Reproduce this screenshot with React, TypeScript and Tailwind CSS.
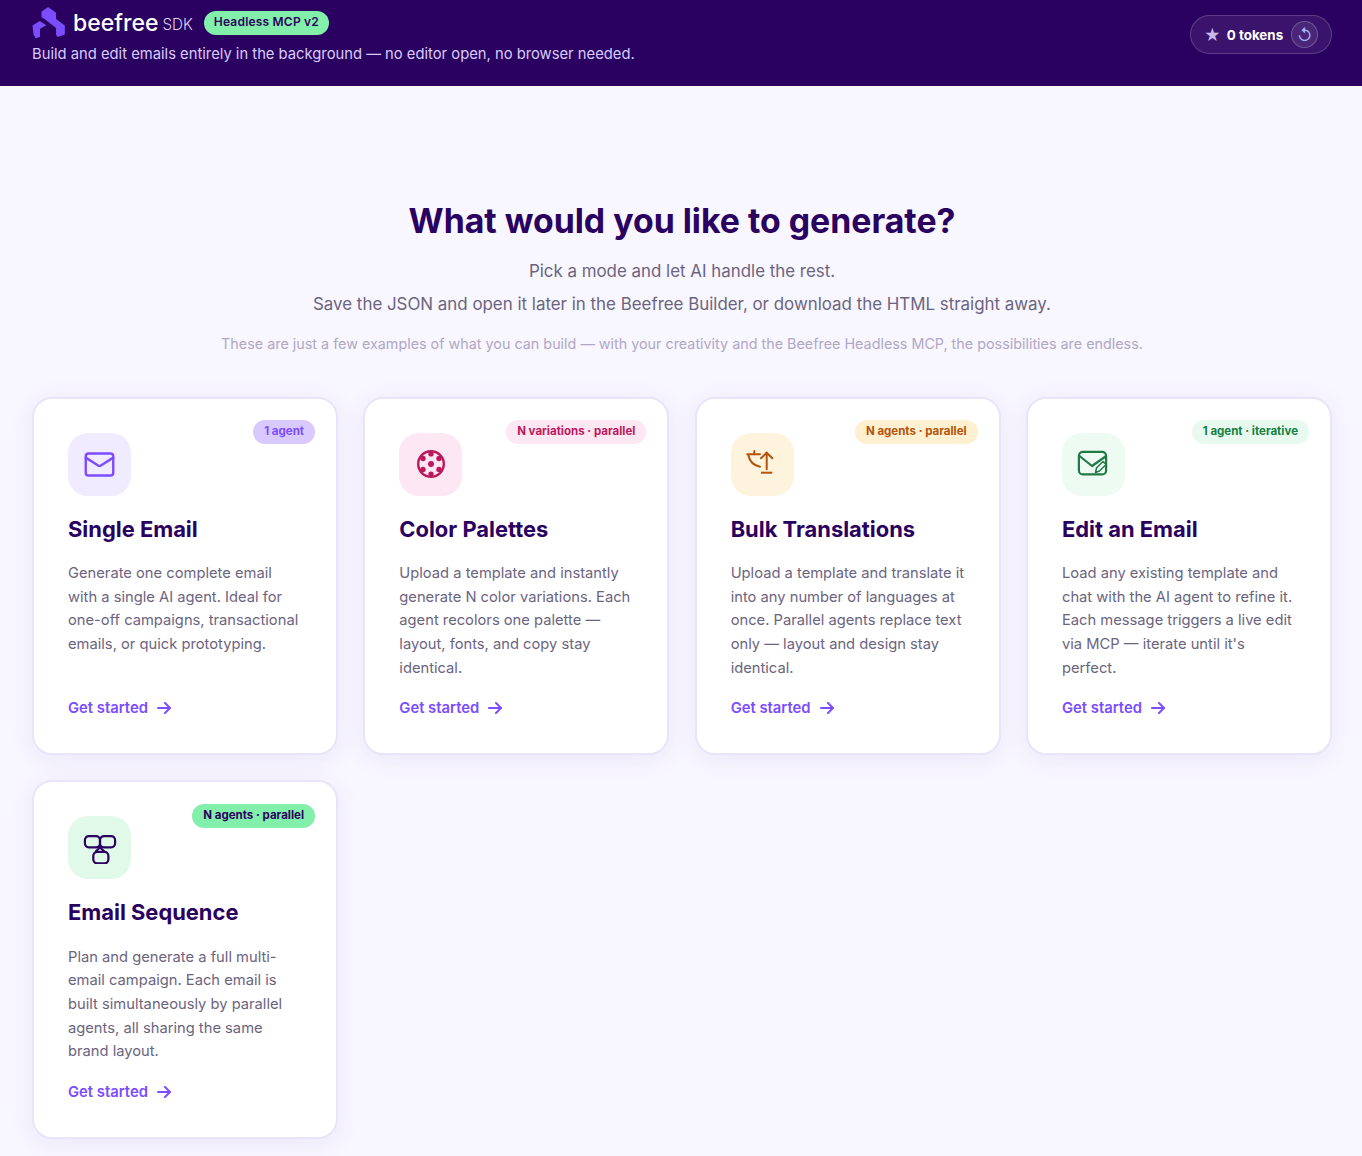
import { Mail } from "lucide-react";
import type { ReactNode } from "react";

// Small hand drawn icons for the cards lucide has no match for
const PaletteIcon = () => (
  <svg width="28" height="28" viewBox="0 0 28 28" fill="currentColor">
    <circle cx="14" cy="14" r="12.8" fill="none" stroke="currentColor" strokeWidth="2.4" />
    <circle cx="14" cy="14" r="3" />
    <circle cx="14" cy="3.900" r="2.700" />
    <circle cx="14" cy="24.100" r="2.700" />
    <circle cx="6" cy="8.500" r="2.700" />
    <circle cx="22" cy="8.500" r="2.700" />
    <circle cx="6" cy="19.500" r="2.700" />
    <circle cx="22" cy="19.500" r="2.700" />
  </svg>
);

const TranslateIcon = () => (
  <svg width="32" height="28" viewBox="0 0 32 28" fill="none" stroke="currentColor" strokeWidth="2" strokeLinecap="round">
    <path d="M1.300 4.300H14" />
    <path d="M8.300 1V4.300" />
    <path d="M2.300 5C3.500 11 8 15.500 14 16.700" />
    <path d="M20.700 3V19.300" />
    <path d="M15 8.300L20.700 2.700L26.300 8.300" />
    <path d="M15 22.700H26.300" strokeLinecap="butt" />
  </svg>
);

const EditMailIcon = () => (
  <svg width="32" height="28" viewBox="0 0 32 28" fill="none" stroke="currentColor" strokeWidth="2.200" strokeLinecap="round" strokeLinejoin="round">
    <rect x="1.900" y="1.900" width="27.200" height="22.500" rx="4" />
    <path d="M2.500 6L15 16L28.500 6.500" />
    <path d="M18.500 22.500L19.500 18L26 11.500L29 14.500L22.500 21z" fill="#edfbf3" strokeWidth="1.500" />
  </svg>
);

const SequenceIcon = () => (
  <svg width="36" height="32" viewBox="0 0 36 32" fill="none" stroke="currentColor" strokeWidth="2.200" strokeLinejoin="round">
    <rect x="2.900" y="4.100" width="15.100" height="11.200" rx="4" />
    <rect x="18" y="4.100" width="15.100" height="11.200" rx="4" />
    <rect x="11.300" y="19.800" width="15.100" height="11.500" rx="4" />
    <path d="M13.500 19.700L18 15.200L22.500 19.700" />
  </svg>
);

const ArrowIcon = () => (
  <svg width="14" height="12" viewBox="0 0 14 12" fill="none" stroke="currentColor" strokeWidth="2" strokeLinecap="round" strokeLinejoin="round">
    <path d="M1 6H13" />
    <path d="M8 1L13 6L8 11" />
  </svg>
);

const Logo = () => (
  <svg width="34" height="32" viewBox="0 0 34 33" fill="#7c4dff">
    <path d="M9.300 5L16 0L24.300 6V12.300L33.300 19V28.300L26 31L24.300 29V21.700L16.700 15.700L12.500 12.500L9.300 10.500z" />
    <path d="M0 19L7.500 14.500L14.300 18.700L7.700 22.500V31L3.300 32.300L1 28.300z" />
  </svg>
);

type Mode = {
  title: string;
  text: string;
  badge: string;
  badgeClass: string;
  iconClass: string;
  icon: ReactNode;
};

const modes: Mode[] = [
  {
    title: "Single Email",
    text: "Generate one complete email with a single AI agent. Ideal for one-off campaigns, transactional emails, or quick prototyping.",
    badge: "1 agent",
    badgeClass: "bg-[#d8c9ff] text-[#7c4dff]",
    iconClass: "bg-[#f1ebff] text-[#7c4dff]",
    icon: <Mail size={33} strokeWidth={1.75} />,
  },
  {
    title: "Color Palettes",
    text: "Upload a template and instantly generate N color variations. Each agent recolors one palette — layout, fonts, and copy stay identical.",
    badge: "N variations · parallel",
    badgeClass: "bg-[#fce7f3] text-[#be185d]",
    iconClass: "bg-[#fce7f3] text-[#be185d]",
    icon: <PaletteIcon />,
  },
  {
    title: "Bulk Translations",
    text: "Upload a template and translate it into any number of languages at once. Parallel agents replace text only — layout and design stay identical.",
    badge: "N agents · parallel",
    badgeClass: "bg-[#fef0d0] text-[#b45309]",
    iconClass: "bg-[#fef4de] text-[#b45309]",
    icon: <TranslateIcon />,
  },
  {
    title: "Edit an Email",
    text: "Load any existing template and chat with the AI agent to refine it. Each message triggers a live edit via MCP — iterate until it's perfect.",
    badge: "1 agent · iterative",
    badgeClass: "bg-[#e8faf0] text-[#15803d]",
    iconClass: "bg-[#edfbf3] text-[#1f7a45]",
    icon: <EditMailIcon />,
  },
  {
    title: "Email Sequence",
    text: "Plan and generate a full multi-email campaign. Each email is built simultaneously by parallel agents, all sharing the same brand layout.",
    badge: "N agents · parallel",
    badgeClass: "bg-[#82f0aa] text-[#2a0060]",
    iconClass: "bg-[#e0f9e9] text-[#2a0060]",
    icon: <SequenceIcon />,
  },
];

function ModeCard({ mode }: { mode: Mode }) {
  return (
    <div className="relative flex h-[358.2px] flex-col rounded-[20px] border-2 border-[#e9e4f7] bg-white px-[34px] pt-[34px] pb-[35px] shadow-[0_4px_24px_rgba(90,60,190,0.08)]">
      <span
        className={`absolute top-[21.2px] right-[21px] rounded-full px-[11px] pt-[3px] pb-[4px] text-[11.5px] leading-[17px] font-bold ${mode.badgeClass}`}
      >
        {mode.badge}
      </span>
      <div
        className={`flex h-[63px] w-[63px] items-center justify-center rounded-[20px] ${mode.iconClass}`}
      >
        {mode.icon}
      </div>
      <h3 className="mt-[19px] text-[21.9px] leading-[29px] font-bold text-[#2a0060]">
        {mode.title}
      </h3>
      <p className="mt-[18.2px] text-[14.72px] leading-[23.7px] text-[#6b6480]">
        {mode.text}
      </p>
      <a className="mt-auto flex items-center gap-[9px] text-[14.8px] leading-[20px] font-semibold text-[#7c4dff]">
        Get started <ArrowIcon />
      </a>
    </div>
  );
}

export default function App() {
  return (
    <div className="min-h-[1156px] bg-[#f8f6ff] font-['Inter',sans-serif]">
      <header className="flex h-[86px] items-start justify-between bg-[#2a0060] pr-[30px] pl-[32px]">
        <div className="pt-[5.5px]">
          <div className="flex items-center">
            <Logo />
            <span className="ml-[7px] text-[23px] leading-[32px] font-medium text-white">
              beefree
            </span>
            <span className="ml-[4px] pt-[3px] text-[15.2px] leading-[32px] font-light text-[#ddd6f3]">
              SDK
            </span>
            <span className="ml-[11px] rounded-full bg-[#82f0aa] px-[10px] pt-[1px] pb-[3px] text-[12px] leading-[20px] font-semibold tracking-[0.2px] text-[#2a0060]">
              Headless MCP v2
            </span>
          </div>
          <p className="mt-[2px] text-[14.78px] leading-[22px] text-[#d6ccff]">
            Build and edit emails entirely in the background — no editor open, no browser needed.
          </p>
        </div>
        <div className="mt-[15px] flex h-[39px] w-[142px] items-center rounded-full border border-[rgba(255,255,255,0.18)] bg-[rgba(255,255,255,0.08)] pl-[13px]">
          <span className="text-[16px] leading-none text-[#c9b8e8]">★</span>
          <span className="mt-[1px] ml-[6px] text-[13.4px] font-bold text-white">0 tokens</span>
          <span className="ml-[8px] flex h-[27px] w-[27px] items-center justify-center rounded-full border border-[rgba(255,255,255,0.22)] bg-[rgba(255,255,255,0.08)] text-[16px] leading-none text-[#a9b4f0]">
            ↺
          </span>
        </div>
      </header>

      <main className="pr-[30px] pl-[32px]">
        <div className="pt-[113px] text-center">
          <h1 className="text-[33.8px] leading-[44px] font-bold text-[#2a0060]">
            What would you like to generate?
          </h1>
          <p className="mt-[17px] text-[16.9px] leading-[23px] text-[#6b6480]">
            Pick a mode and let AI handle the rest.
          </p>
          <p className="mt-[10px] text-[16.9px] leading-[23px] text-[#6b6480]">
            Save the JSON and open it later in the Beefree Builder, or download the HTML straight away.
          </p>
          <p className="mt-[17px] text-[14.35px] leading-[22px] text-[#b0a8c4]">
            These are just a few examples of what you can build — with your creativity and the Beefree Headless MCP, the possibilities are endless.
          </p>
        </div>
        <div className="mt-[41.8px] grid grid-cols-4 gap-x-[25.3px] gap-y-[25.4px] pb-[17px]">
          {modes.map((mode) => (
            <ModeCard key={mode.title} mode={mode} />
          ))}
        </div>
      </main>
    </div>
  );
}
